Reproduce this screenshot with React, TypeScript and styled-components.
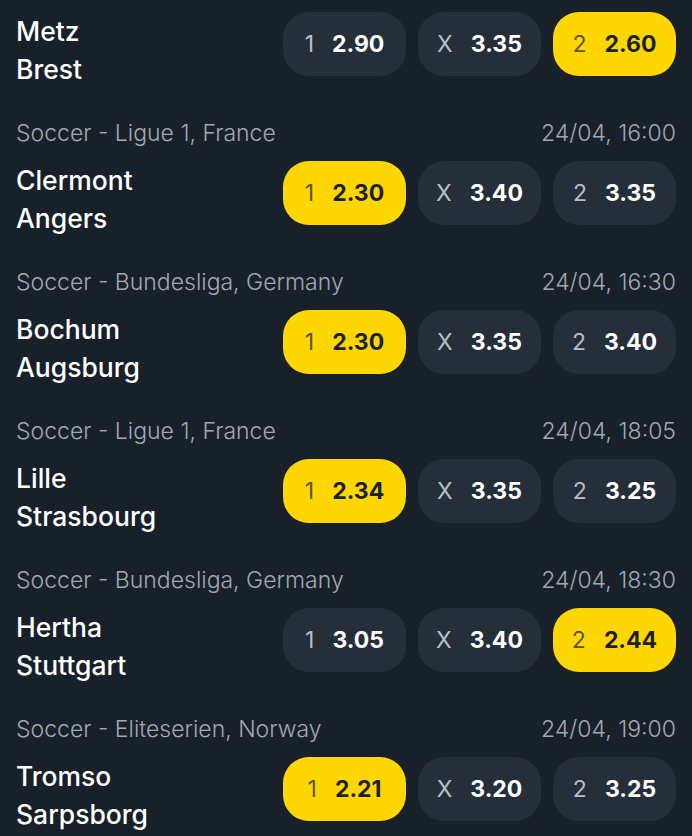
import React from 'react'
import styled, { createGlobalStyle } from 'styled-components'

interface Odd {
  label: string;
  value: string;
}

interface Event {
  league?: string;
  date?: string;
  home: string;
  away: string;
  odds: Odd[];
  picked: number;
}

const events: Event[] = [
  { home: 'Metz', away: 'Brest', odds: [{ label: '1', value: '2.90' }, { label: 'X', value: '3.35' }, { label: '2', value: '2.60' }], picked: 2 },
  { league: 'Soccer - Ligue 1, France', date: '24/04, 16:00', home: 'Clermont', away: 'Angers', odds: [{ label: '1', value: '2.30' }, { label: 'X', value: '3.40' }, { label: '2', value: '3.35' }], picked: 0 },
  { league: 'Soccer - Bundesliga, Germany', date: '24/04, 16:30', home: 'Bochum', away: 'Augsburg', odds: [{ label: '1', value: '2.30' }, { label: 'X', value: '3.35' }, { label: '2', value: '3.40' }], picked: 0 },
  { league: 'Soccer - Ligue 1, France', date: '24/04, 18:05', home: 'Lille', away: 'Strasbourg', odds: [{ label: '1', value: '2.34' }, { label: 'X', value: '3.35' }, { label: '2', value: '3.25' }], picked: 0 },
  { league: 'Soccer - Bundesliga, Germany', date: '24/04, 18:30', home: 'Hertha', away: 'Stuttgart', odds: [{ label: '1', value: '3.05' }, { label: 'X', value: '3.40' }, { label: '2', value: '2.44' }], picked: 2 },
  { league: 'Soccer - Eliteserien, Norway', date: '24/04, 19:00', home: 'Tromso', away: 'Sarpsborg', odds: [{ label: '1', value: '2.21' }, { label: 'X', value: '3.20' }, { label: '2', value: '3.25' }], picked: 0 },
]

const GlobalStyle = createGlobalStyle`
  html, body {
    margin: 0;
    padding: 0;
    background: #18202a;
    font-family: Inter, "Noto Sans", sans-serif;
  }
`

const App: React.FC = () => {
  return (
    <>
      <GlobalStyle />
      <List>
        {events.map((ev) => (
          <EventBlock key={ev.home}>
            {ev.league && (
              <Header>
                <span>{ev.league}</span>
                <span>{ev.date}</span>
              </Header>
            )}
            <MatchRow>
              <Teams>
                <span>{ev.home}</span>
                <span>{ev.away}</span>
              </Teams>
              <OddsGroup>
                {ev.odds.map((o, i) => (
                  <OddButton key={o.label} $active={i === ev.picked}>
                    <OddLabel $active={i === ev.picked}>{o.label}</OddLabel>
                    <OddValue>{o.value}</OddValue>
                  </OddButton>
                ))}
              </OddsGroup>
            </MatchRow>
          </EventBlock>
        ))}
      </List>
    </>
  )
}

const List = styled.div`
  display: flex;
  flex-direction: column;
  gap: 31px;
  padding: 12px 16px 0;
  height: 836px;
  box-sizing: border-box;
  overflow: hidden;
`

const EventBlock = styled.section`
  display: flex;
  flex-direction: column;
  gap: 14px;
`

const Header = styled.div`
  display: flex;
  justify-content: space-between;
  font-size: 23px;
  font-weight: 300;
  line-height: 28px;
  color: #a2a8b0;
`

const MatchRow = styled.div`
  display: flex;
  justify-content: space-between;
  align-items: flex-start;
`

const Teams = styled.div`
  display: flex;
  flex-direction: column;
  font-size: 26.5px;
  line-height: 38px;
  font-weight: 500;
  color: #ffffff;
`

const OddsGroup = styled.div`
  display: flex;
  gap: 12px;
`

const OddButton = styled.button<{ $active: boolean }>`
  width: 123px;
  height: 64px;
  border: none;
  border-radius: 26px;
  padding: 0;
  display: flex;
  align-items: center;
  justify-content: center;
  gap: 18px;
  font-family: inherit;
  background: ${({ $active }) => ($active ? '#ffd700' : '#252e39')};
  color: ${({ $active }) => ($active ? '#1b1f26' : '#ffffff')};
`

const OddLabel = styled.span<{ $active: boolean }>`
  font-size: 23px;
  font-weight: 400;
  color: ${({ $active }) => ($active ? '#5a5430' : '#b9bfc7')};
`

const OddValue = styled.span`
  font-size: 23px;
  font-weight: 700;
`

export default App
